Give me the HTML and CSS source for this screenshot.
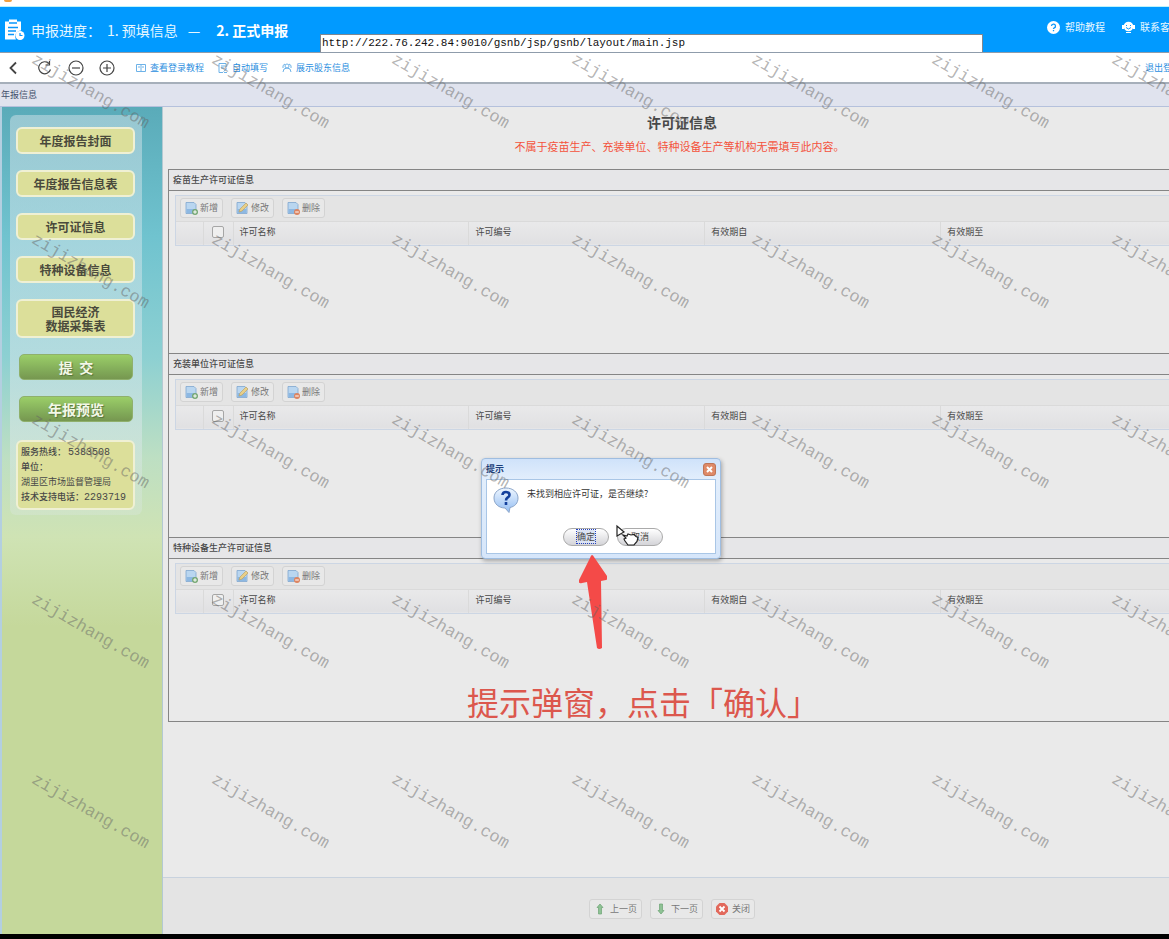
FILE: index.html
```html
<!DOCTYPE html>
<html lang="zh">
<head>
<meta charset="utf-8">
<title>许可证信息</title>
<link rel="stylesheet" href="styles.css">
</head>
<body>
<svg class="defs" width="0" height="0" aria-hidden="true">
  <symbol id="doc" viewBox="0 0 12 12"><path d="M1 .5h8l2 2v9H1z" fill="#b9d6f0" stroke="#7fa6cf" stroke-width=".8"/><path d="M1.500 7h9v4h-9z" fill="#8db8e2"/></symbol>
  <symbol id="add" viewBox="0 0 13 13"><use href="#doc" width="12" height="12"/><circle cx="10" cy="10" r="3" fill="#76a874"/><path d="M10 8.200v3.600M8.200 10h3.600" stroke="#fff"/></symbol>
  <symbol id="edit" viewBox="0 0 13 13"><use href="#doc" width="12" height="12"/><path d="M3 10l1-3 6-6 2 2-6 6z" fill="#e8cf88" stroke="#b99c5c" stroke-width=".6"/></symbol>
  <symbol id="del" viewBox="0 0 13 13"><use href="#doc" width="12" height="12"/><circle cx="10" cy="10" r="3" fill="#dd8460"/><path d="M8.200 10h3.600" stroke="#fff"/></symbol>
</svg>
<div class="app">
  <div class="strip"><span class="strip-logo"></span></div>
  <header class="header">
    <div class="progress">
      <svg class="logo" viewBox="0 0 22 23"><path d="M1 3h4V1h8v2h4v9a6 6 0 0 0-5 9H1z" fill="#fff"/><path d="M5 4.500h8M4 9h10M4 12.500h8M4 16h6" stroke="#0a98fb" stroke-width="1.500"/><circle cx="16" cy="17" r="4.500" fill="#fff"/><path d="M16 14.500V17h2.500" stroke="#0a98fb" stroke-width="1.200" fill="none"/></svg>
      <span class="label">申报进度：</span>
      <span>1. 预填信息</span>
      <span class="dash">—</span>
      <strong>2. 正式申报</strong>
    </div>
    <input class="url" type="text" aria-label="地址" value="http://222.76.242.84:9010/gsnb/jsp/gsnb/layout/main.jsp">
    <nav class="help">
      <a href="#"><svg width="13" height="13" viewBox="0 0 13 13"><circle cx="6.500" cy="6.500" r="6.500" fill="#fff"/><path d="M4.500 5a2 2 0 1 1 2.500 2q-.5.300-.5 1M6.500 9v1.300" stroke="#0a98fb" stroke-width="1.300" fill="none"/></svg>帮助教程</a>
      <a href="#"><svg width="13" height="13" viewBox="0 0 13 13"><circle cx="6.500" cy="5.500" r="4.800" fill="#fff"/><path d="M0 4h2v4H0zM11 4h2v4h-2zM4 11h5v1H4z" fill="#fff"/><path d="M4 6.500q2.500 3 5 0M4.500 4v1M8.500 4v1" stroke="#0a98fb" fill="none"/></svg>联系客服</a>
    </nav>
  </header>
  <div class="toolbar">
    <div class="nav-icons">
      <button aria-label="后退"><svg viewBox="0 0 16 16"><path d="M10 2.500L4.500 8l5.500 5.500" stroke-width="1.800"/></svg></button>
      <button aria-label="刷新"><svg viewBox="0 0 16 16"><path d="M13.500 9.500a6 6 0 1 1-1.500-6M12.500 1v4h-4"/></svg></button>
      <button aria-label="缩小"><svg viewBox="0 0 16 16"><circle cx="8" cy="8" r="7"/><path d="M4 8h8"/></svg></button>
      <button aria-label="放大"><svg viewBox="0 0 16 16"><circle cx="8" cy="8" r="7"/><path d="M4 8h8M8 4v8"/></svg></button>
    </div>
    <nav class="tool-links">
      <a href="#"><svg viewBox="0 0 10 10"><path d="M.5 1.500h9v7h-9zM5 1.500v7M2 4h2M6 4h2"/></svg>查看登录教程</a>
      <a href="#"><svg viewBox="0 0 10 10"><path d="M8 4V.5H1v9h4M3 3h4M3 5h3M5.500 8.500l3.500-3M6 9.500h3"/></svg>自动填写</a>
      <a href="#"><svg viewBox="0 0 10 10"><circle cx="5" cy="3" r="2"/><path d="M1 9q0-4 4-4t4 4M1 5q-1-3 2-4M9 5q1-3-2-4"/></svg>展示股东信息</a>
    </nav>
    <a class="logout" href="#">退出登录</a>
  </div>
  <div class="crumb">年报信息</div>
  <div class="body">
    <aside class="side">
      <nav class="panel">
        <button class="item">年度报告封面</button>
        <button class="item">年度报告信息表</button>
        <button class="item">许可证信息</button>
        <button class="item">特种设备信息</button>
        <button class="item tall">国民经济<br>数据采集表</button>
        <button class="green">提&nbsp; 交</button>
        <button class="green">年报预览</button>
        <div class="info">
          <div><b>服务热线：</b> <span class="num">5383508</span></div>
          <div><b>单位：</b></div>
          <div>湖里区市场监督管理局</div>
          <div><b>技术支持电话：</b><span class="num">2293719</span></div>
        </div>
      </nav>
    </aside>
    <main class="main">
      <div class="content">
        <h1>许可证信息</h1>
        <p class="notice">不属于疫苗生产、充装单位、特种设备生产等机构无需填写此内容。</p>
        <div class="sections">
          <section class="section">
            <h2>疫苗生产许可证信息</h2>
            <div class="grid">
              <div class="actions"><button><svg><use href="#add"/></svg>新增</button><button><svg><use href="#edit"/></svg>修改</button><button><svg><use href="#del"/></svg>删除</button></div>
              <table><tr><th class="c-no"></th><th class="c-box"><input type="checkbox" aria-label="全选"></th><th>许可名称</th><th>许可编号</th><th>有效期自</th><th>有效期至</th></tr></table>
            </div>
          </section>
          <section class="section">
            <h2>充装单位许可证信息</h2>
            <div class="grid">
              <div class="actions"><button><svg><use href="#add"/></svg>新增</button><button><svg><use href="#edit"/></svg>修改</button><button><svg><use href="#del"/></svg>删除</button></div>
              <table><tr><th class="c-no"></th><th class="c-box"><input type="checkbox" aria-label="全选"></th><th>许可名称</th><th>许可编号</th><th>有效期自</th><th>有效期至</th></tr></table>
            </div>
          </section>
          <section class="section">
            <h2>特种设备生产许可证信息</h2>
            <div class="grid">
              <div class="actions"><button><svg><use href="#add"/></svg>新增</button><button><svg><use href="#edit"/></svg>修改</button><button><svg><use href="#del"/></svg>删除</button></div>
              <table><tr><th class="c-no"></th><th class="c-box"><input type="checkbox" aria-label="全选"></th><th>许可名称</th><th>许可编号</th><th>有效期自</th><th>有效期至</th></tr></table>
            </div>
          </section>
        </div>
      </div>
      <footer class="pager">
        <button><svg viewBox="0 0 12 12"><path d="M6 1l3 3.500H7.500V11h-3V4.500H3z" fill="#8fc295" stroke="#6ba473" stroke-width=".7"/></svg>上一页</button>
        <button><svg viewBox="0 0 12 12"><path d="M6 11l3-3.500H7.500V1h-3v6.500H3z" fill="#8fc295" stroke="#6ba473" stroke-width=".7"/></svg>下一页</button>
        <button><svg viewBox="0 0 12 12"><path d="M3.500 0h5L12 3.500v5L8.500 12h-5L0 8.500v-5z" fill="#e2695c"/><path d="M3.500 3.500l5 5M8.500 3.500l-5 5" stroke="#fff" stroke-width="1.800"/></svg>关闭</button>
      </footer>
    </main>
  </div>
  <div class="bottom"></div>

  <div class="dialog" role="dialog" aria-labelledby="dlg-title">
    <div class="dlg-head"><span id="dlg-title">提示</span>
      <button aria-label="关闭"><svg width="13" height="13" viewBox="0 0 13 13"><rect x=".5" y=".5" width="12" height="12" rx="2.500" fill="#df8a68" stroke="#bd7558"/><path d="M4 4l5 5M9 4l-5 5" stroke="#fff" stroke-width="2"/></svg></button></div>
    <div class="dlg-body">
      <div class="msg">
        <svg width="26" height="26" viewBox="0 0 26 26"><defs><linearGradient id="bub" x2="0" y2="1"><stop offset="0" stop-color="#eef6ff"/><stop offset="1" stop-color="#93bdf2"/></linearGradient></defs><path d="M13 1c7 0 12 4.500 12 10 0 5-3 8.500-8 9.500l-1 5-4-4.500C6 21 1 17 1 11S6 1 13 1z" fill="url(#bub)" stroke="#8ba5c9"/><path d="M9.500 8q0-3 3.500-3t3.500 3q0 1.500-2 2.700-1.500 1-1.500 2.800M13 15v3" fill="none" stroke="#14409c" stroke-width="2.600"/></svg>
        <span>未找到相应许可证，是否继续?</span>
      </div>
      <div class="dlg-buttons"><button><span class="focus">确定</span></button><button>取消</button></div>
    </div>
  </div>
  <svg class="cursor" viewBox="0 0 26 24"><path d="M2 2v10l7-4z" fill="#fff" stroke="#222" stroke-width="1.200"/><path d="M8 11l4 1 1-2 3 1 3-.5 2 2 2 1-1 4-3 3.500h-6l-3-4-1-2 2-1z" fill="#fff" stroke="#222" stroke-width="1.200"/></svg>
  <svg class="arrow" viewBox="0 0 28 95"><path d="M13 0q-1 0-2 3L0 25q-1 4 3 3l5-1 10 66q2 2 5 0l-1-67 5-1q3-1 1-4L15 2q-1-2-2-2z" fill="#f44a48"/></svg>
  <div class="caption">提示弹窗，点击「确认」</div>
  <div class="marks" aria-hidden="true">
    <span>zijizhang.com</span><span>zijizhang.com</span><span>zijizhang.com</span><span>zijizhang.com</span><span>zijizhang.com</span><span>zijizhang.com</span><span>zijizhang.com</span>
    <span>zijizhang.com</span><span>zijizhang.com</span><span>zijizhang.com</span><span>zijizhang.com</span><span>zijizhang.com</span><span>zijizhang.com</span><span>zijizhang.com</span>
    <span>zijizhang.com</span><span>zijizhang.com</span><span>zijizhang.com</span><span>zijizhang.com</span><span>zijizhang.com</span><span>zijizhang.com</span><span>zijizhang.com</span>
    <span>zijizhang.com</span><span>zijizhang.com</span><span>zijizhang.com</span><span>zijizhang.com</span><span>zijizhang.com</span><span>zijizhang.com</span><span>zijizhang.com</span>
    <span>zijizhang.com</span><span>zijizhang.com</span><span>zijizhang.com</span><span>zijizhang.com</span><span>zijizhang.com</span><span>zijizhang.com</span><span>zijizhang.com</span>
  </div>
</div>
</body>
</html>
```

FILE: styles.css
```css
* { box-sizing: border-box; }
body { margin: 0; font: 9px/14px "Noto Sans CJK SC", sans-serif; color: #484848; background: #eaeaea; }
button, input { font: inherit; color: inherit; margin: 0; }
button { padding: 0; border: 0; background: none; white-space: nowrap; }
a { color: inherit; text-decoration: none; }
h1, h2, p { margin: 0; }
.defs { position: absolute; }
.app { position: relative; display: flex; flex-direction: column; min-height: 100vh; overflow: hidden; }

.strip { height: 7px; background: #fff; border-bottom: 1px solid #bdf3fb; }
.strip-logo { display: block; width: 8px; height: 2px; margin-left: 4px; background: #f0a040; border-radius: 0 0 4px 4px; }

.header { display: flex; height: 46px; background: #019aff; color: #e6f7ff; overflow: hidden; white-space: nowrap; border-bottom: 1px solid #8f9cab; }
.progress { display: flex; align-items: center; flex: 0 0 320px; padding-left: 4px; font-size: 14px; line-height: 20px; }
.logo { width: 22px; height: 24px; margin-right: 5px; }
.label { margin-right: 6px; }
.dash { margin: 0 16px 0 10px; }
.progress strong { color: #fff; }
.url { flex: 0 0 663px; align-self: flex-end; height: 18px; padding: 0 1px 2px; border: 1px solid #7f8790; border-bottom: 0; border-radius: 0; background: #fff; color: #111; font: 11px "Liberation Mono", monospace; }
.help { display: flex; flex: 1; min-width: 0; gap: 17px; padding: 12px 0 0 64px; }
.help a { display: flex; align-items: center; gap: 5px; height: 16px; font-size: 10px; flex: none; }

.toolbar { display: flex; align-items: center; height: 31px; background: #fff; border-bottom: 2px solid #a6afba; color: #2b8ee0; white-space: nowrap; }
.nav-icons { display: flex; gap: 15px; padding-left: 6px; }
.nav-icons button, .nav-icons svg { display: block; width: 16px; height: 16px; }
.nav-icons svg { fill: none; stroke: #444; stroke-width: 1.2; }
.tool-links { display: flex; gap: 14px; margin-left: 21px; }
.tool-links a { display: flex; align-items: center; gap: 4px; }
.tool-links svg { width: 10px; height: 10px; fill: none; stroke: #6db2e8; }
.logout { margin-left: auto; margin-right: -12px; }

.crumb { height: 23px; padding: 4px 1px; background: #e0e3ee; border-bottom: 1px solid #b5c1dc; color: #42506c; }

.body { display: flex; flex: 1; }
.side { flex: 0 0 163px; padding: 8px 20px 0 8px; border-left: 2px solid #b3cfe0; border-right: 1px solid #b3c9d2; background: linear-gradient(#5aabb9 0, #70c3cf 130px, #8dd0d2 250px, #bddfc3 350px, #cfe3b4 430px, #c5d89b 520px); }
.panel { display: flex; flex-direction: column; gap: 16px; padding: 12px 7px 5px 6px; background: linear-gradient(rgba(225, 233, 238, .45) 80%, rgba(225, 233, 238, .25)); border-radius: 6px; }
.item { height: 27px; border: 2px solid #eff0d4; border-radius: 6px; background: #dcdf9a; font-size: 12px; line-height: 14px; font-weight: 700; color: #4a4a3c; }
.tall { height: 39px; }
.green { height: 26px; margin: 0 2px 0 3px; border: 1px solid #8fb06c; border-radius: 5px; background: linear-gradient(#9bce68, #83ad5a 60%, #769750); color: #f3f8e8; font-size: 14px; font-weight: 700; text-shadow: 1px 1px 1px #58743c; }
.info { margin-top: 2px; padding: 2px 3px 4px; border: 2px solid #eff0d4; border-radius: 6px; background: #dcdf9a; line-height: 15px; white-space: nowrap; }
.info b { font-weight: 500; }
.num { font: 10px "Liberation Mono", monospace; }

.main { display: flex; flex-direction: column; flex: 1; min-width: 0; }
.content { flex: 1; padding: 4px 0 0 5px; overflow: hidden; }
h1 { padding-left: 27px; font-size: 14px; line-height: 22px; text-align: center; }
.notice { padding: 3px 0 0 22px; font-size: 11px; line-height: 20px; text-align: center; color: #f4523c; }
.sections { margin: 13px -16px 0 0; border: 1px solid #858585; border-top: 0; }
.section { height: 184px; border-top: 1px solid #858585; }
h2 { height: 21px; padding: 3px 4px; border-bottom: 1px solid #858585; background: #e6e6e8; font-size: 9px; line-height: 14px; font-weight: 500; }
.grid { margin: 4px 6px 0; border: 1px solid #ccd6e4; background: #e4e4e4; }
.actions { display: flex; gap: 8px; height: 25px; padding: 2px 4px; }
.actions button, .pager button { display: flex; align-items: center; gap: 2px; height: 20px; padding: 0 4px; border: 1px solid #d3d3d3; border-radius: 3px; background: #e8e8e8; color: #777; }
.actions svg { width: 13px; height: 13px; }
table { width: 100%; table-layout: fixed; border-collapse: collapse; background: linear-gradient(#e9e9ea, #e0e0e2); border-top: 1px solid #dadada; }
th { height: 23px; padding: 0 0 2px 6px; border-right: 1px solid #dadada; font-weight: 400; text-align: left; }
.c-no { width: 27px; }
.c-box { width: 30px; padding-left: 8px; }
th input { display: block; appearance: none; width: 12px; height: 12px; border: 1px solid #a6a6a6; border-radius: 2px; background: #efefef; }
.pager { display: flex; gap: 8px; justify-content: center; align-items: center; height: 57px; padding: 5px 0 0 12px; border-top: 1px solid #c8d2de; background: #e4e4e4; }
.pager button { gap: 4px; padding: 0 4px; }
.pager svg { width: 12px; height: 12px; }
.bottom { height: 5px; background: #000; }

.dialog { position: absolute; left: 481px; top: 458px; width: 240px; padding: 0 4px 4px; border: 1px solid #9fbde0; border-radius: 4px; background: linear-gradient(#cfe2fa, #e2eefc 20px, #d6e6fa); box-shadow: 1px 2px 4px rgba(0, 0, 0, .3); }
.dlg-head { display: flex; align-items: center; justify-content: space-between; height: 20px; color: #1d3f7a; font-weight: 700; }
.dlg-head svg { display: block; }
.dlg-body { height: 75px; padding: 7px 6px; border: 1px solid #a9c6e6; background: #fff; }
.msg { display: flex; gap: 8px; color: #333; }
.dlg-buttons { display: flex; justify-content: center; gap: 8px; padding: 15px 0 0 24px; }
.dlg-buttons button { width: 46px; height: 18px; border: 1px solid #aaa; border-radius: 9px; background: linear-gradient(#fff, #d4d4d8); }
.focus { outline: 1px dotted #2240c0; background: #dbe3f3; }
.cursor { position: absolute; left: 615px; top: 524px; width: 26px; height: 24px; }
.arrow { position: absolute; left: 579px; top: 555px; width: 28px; height: 95px; }
.caption { position: absolute; left: 467px; top: 681px; font-size: 32px; line-height: 40px; color: #dc574d; white-space: nowrap; }
.marks { position: absolute; left: 0; top: 1px; display: grid; grid-template-columns: repeat(7, 180px); grid-auto-rows: 180px; pointer-events: none; font: 17px "Liberation Mono", monospace; color: rgba(100, 100, 100, .48); }
.marks span { place-self: center; transform: rotate(30deg); }
```
